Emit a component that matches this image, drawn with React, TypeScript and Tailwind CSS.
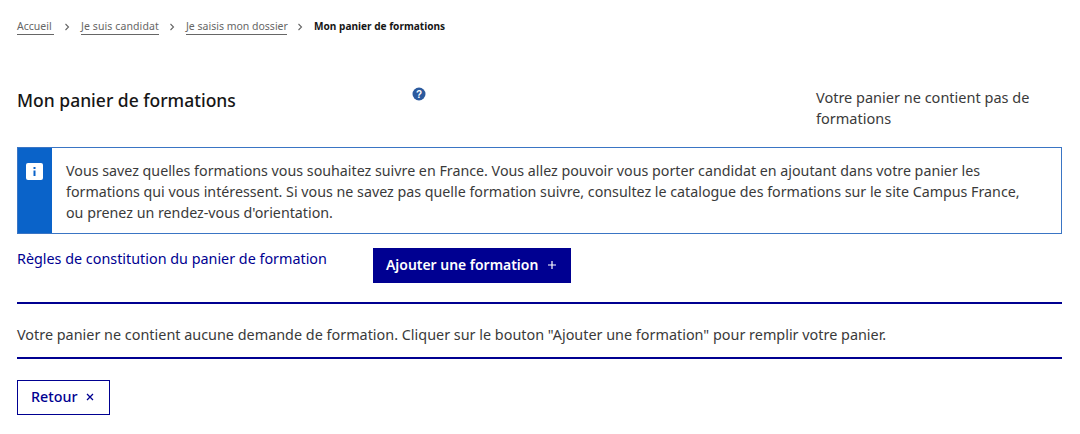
import React from "react";

function Chevron() {
  return (
    <svg className="ml-[7px] mr-[8px] shrink-0" width="12" height="12" viewBox="0 0 12 12" fill="none" stroke="#666" strokeWidth="1.1">
      <path d="M4.5 3l3 3-3 3" />
    </svg>
  );
}

export default function App() {
  return (
    <div className="w-[1080px] h-[434px] bg-white overflow-hidden font-['Noto_Sans',sans-serif] text-[#3a3a3a] pl-[17px] pr-[18px]">
      <nav className="flex items-center h-[17px] mt-[18px] text-[10.5px] leading-[17px] text-[#666]">
        <a className="border-b border-[#666] leading-[15px] w-[37px] whitespace-nowrap">Accueil</a>
        <Chevron />
        <a className="border-b border-[#666] leading-[15px] w-[78px] whitespace-nowrap tracking-[0.1px]">Je suis candidat</a>
        <Chevron />
        <a className="border-b border-[#666] leading-[15px] w-[101px] whitespace-nowrap">Je saisis mon dossier</a>
        <Chevron />
        <span className="font-bold text-[#161616] text-[10.1px]">Mon panier de formations</span>
      </nav>

      <div className="flex mt-[52px] h-[61px]">
        <h1 className="w-[393px] text-[17.5px] leading-[26px] font-medium text-[#161616]">Mon panier de formations</h1>
        <div className="w-[406px]">
          <svg className="ml-[1px] mt-[-1px]" width="16" height="16" viewBox="0 0 16 16">
            <circle cx="8" cy="8" r="6.5" fill="#2b5a9e" />
            <text x="8" y="11.5" textAnchor="middle" fontSize="10" fontWeight="700" fill="#fff" fontFamily="Liberation Sans, sans-serif">?</text>
          </svg>
        </div>
        <p className="w-[230px] text-[14.5px] leading-[21px]">Votre panier ne contient pas de formations</p>
      </div>

      <div className="flex h-[87px] border border-[#3a75c4] mt-[-1px]">
        <div className="w-[34px] bg-[#0a63c9] shrink-0 pt-[15px] pl-[8px]">
          <div className="w-[17px] h-[17px] rounded-[2px] bg-white flex items-center justify-center">
            <svg width="9" height="11" viewBox="0 0 9 11" fill="#0a63c9"><rect x="3.5" y="1" width="2" height="2" /><rect x="3.5" y="4.5" width="2" height="5.5" /></svg>
          </div>
        </div>
        <p className="pl-[14px] pt-[12px] pr-[38px] text-[14.25px] leading-[21px]">
          Vous savez quelles formations vous souhaitez suivre en France. Vous allez pouvoir vous porter candidat en ajoutant dans votre panier les formations qui vous intéressent. Si vous ne savez pas quelle formation suivre, consultez le catalogue des formations sur le site Campus France, ou prenez un rendez-vous d'orientation.
        </p>
      </div>

      <div className="flex mt-[14px]">
        <a className="w-[356px] text-[14.35px] leading-[21px] text-[#000091]">Règles de constitution du panier de formation</a>
        <button className="flex items-center w-[198px] h-[35px] bg-[#000091] text-white text-[13.95px] font-semibold pl-[13px] pb-[1px]">
          Ajouter une formation
          <svg className="ml-[8px]" width="12" height="12" viewBox="0 0 12 12" stroke="#fff" strokeWidth="1.2"><path d="M6 2v8M2 6h8" /></svg>
        </button>
      </div>

      <div className="mt-[19px] border-t-2 border-b-2 border-[#000091] h-[57px] pt-[20px] text-[14.4px] leading-[21px]">
        Votre panier ne contient aucune demande de formation. Cliquer sur le bouton "Ajouter une formation" pour remplir votre panier.
      </div>

      <button className="mt-[21px] flex items-center w-[93px] h-[35px] border border-[#000091] text-[#000091] text-[14.3px] font-medium pl-[13px] pb-[1px]">
        Retour
        <svg className="ml-[7px]" width="12" height="12" viewBox="0 0 12 12" stroke="#000091" strokeWidth="1.3"><path d="M3 3l6 6M9 3l-6 6" /></svg>
      </button>
    </div>
  );
}
